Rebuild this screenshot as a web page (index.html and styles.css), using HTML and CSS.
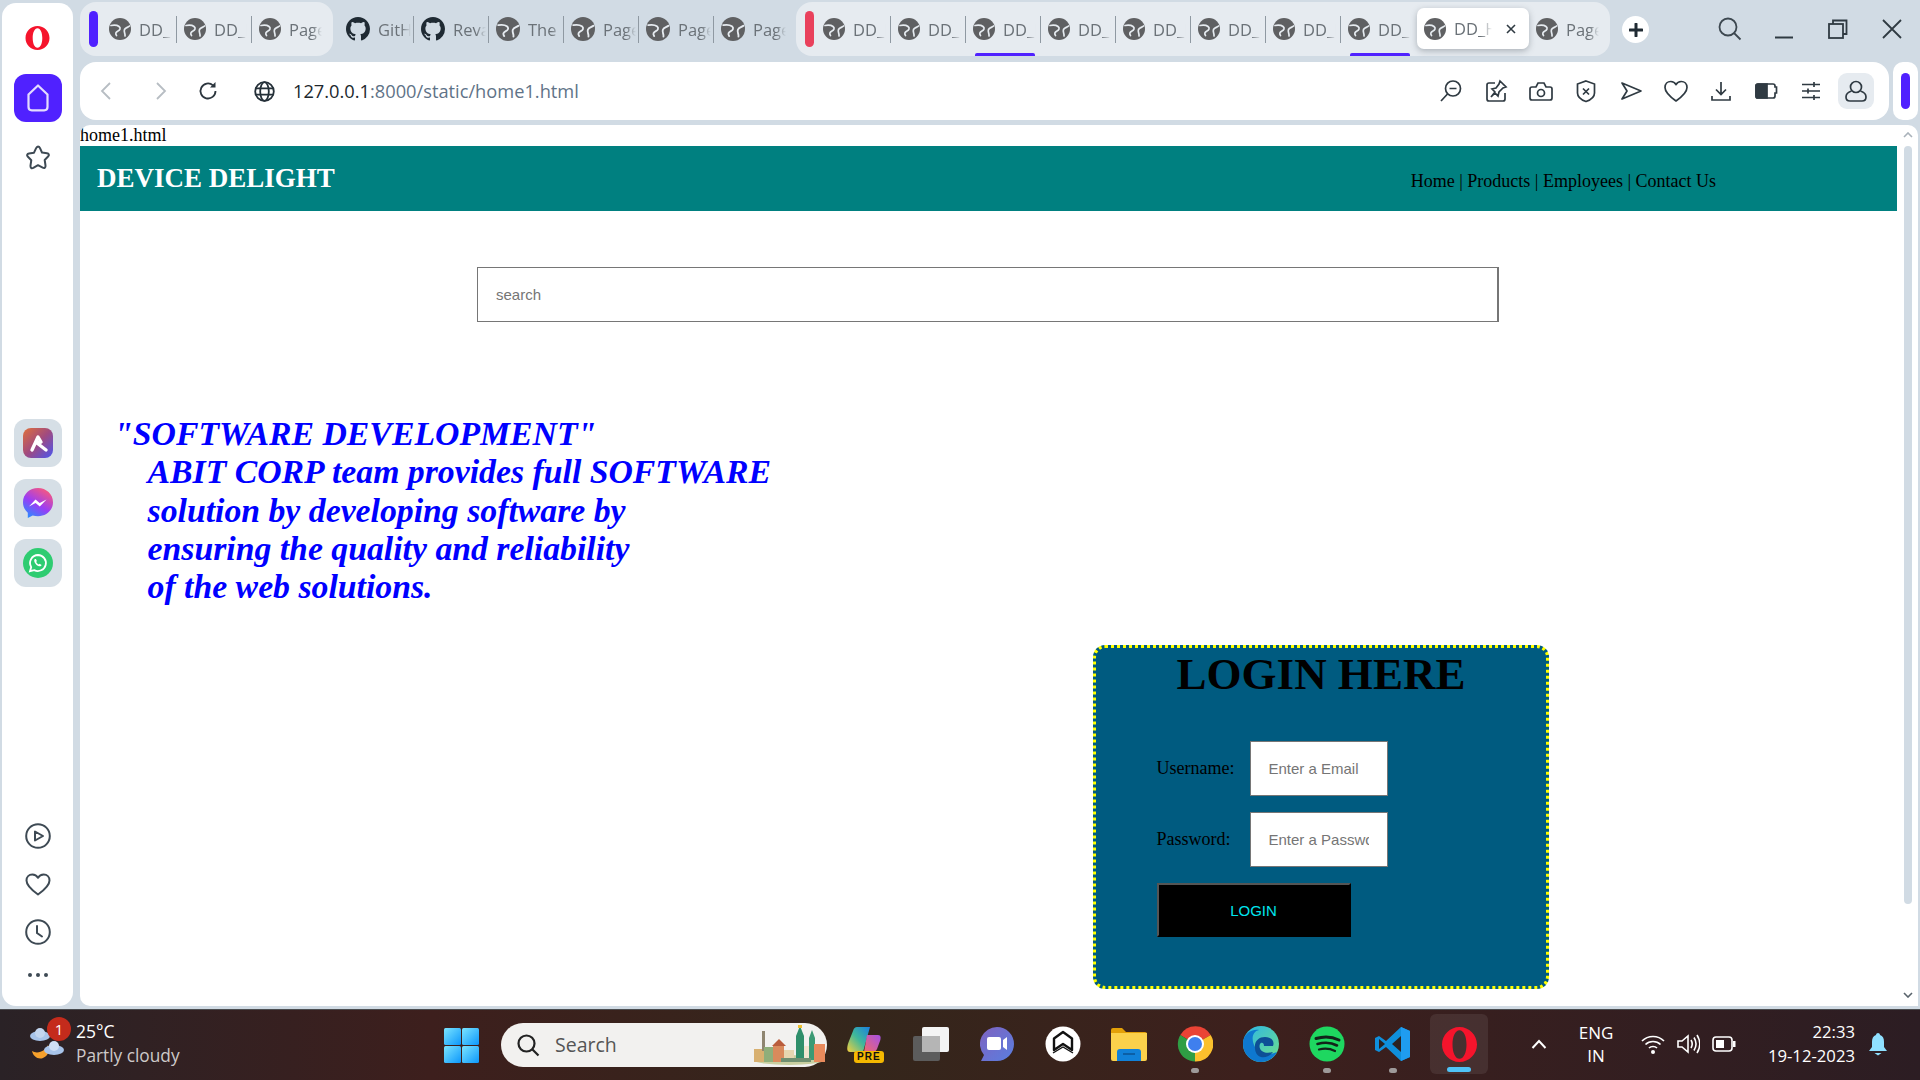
FILE: index.html
```html
<!DOCTYPE html>
<html lang="en">
<head>
<meta charset="utf-8">
<title>DD_Home</title>
<link rel="stylesheet" href="styles.css">
</head>
<body>
<svg class="defs" width="0" height="0" aria-hidden="true">
  <symbol id="globe" viewBox="0 0 22 22">
    <circle cx="11" cy="11" r="11" fill="#5f6062"/>
    <path d="M2 7.500c3-.5 6-.5 8 1 2 1.500 1 3.500-1 4.500-2 1-3 2.500-1.500 4.500M20.500 8c-1.500 1.500-4 1.500-5 3.500-1 2.500 1 4 .5 6.500" fill="none" stroke="#e6ebf0" stroke-width="1.700" stroke-linecap="round"/>
  </symbol>
  <symbol id="github" viewBox="0 0 16 16">
    <path fill="#1f2a33" d="M8 0C3.58 0 0 3.58 0 8c0 3.54 2.29 6.53 5.47 7.59.4.07.55-.17.55-.38 0-.19-.01-.82-.01-1.490-2.010.37-2.530-.49-2.690-.94-.09-.23-.48-.94-.82-1.130-.28-.15-.68-.52-.01-.53.63-.01 1.080.58 1.230.82.72 1.210 1.870.87 2.330.66.07-.52.28-.87.51-1.070-1.780-.2-3.640-.89-3.640-3.950 0-.87.31-1.590.82-2.150-.08-.2-.36-1.020.08-2.120 0 0 .67-.21 2.200.82.64-.18 1.320-.27 2-.27.68 0 1.360.09 2 .27 1.530-1.040 2.200-.82 2.200-.82.44 1.100.16 1.920.08 2.120.51.56.82 1.270.82 2.150 0 3.070-1.870 3.750-3.650 3.950.29.25.54.73.54 1.480 0 1.070-.01 1.930-.01 2.200 0 .21.15.46.55.38A8.013 8.013 0 0 0 16 8c0-4.420-3.580-8-8-8z"/>
  </symbol>
</svg>

<div class="screen">
  <div class="browser">
    <aside class="sidebar">
      <svg class="side-logo" viewBox="0 0 24 24"><path fill="#f5142c" fill-rule="evenodd" d="M12 0c6.600 0 12 5.400 12 12s-5.400 12-12 12S0 18.600 0 12 5.400 0 12 0zm0 2.200c-3 0-4.800 4.500-4.800 9.800s1.800 9.800 4.800 9.800 4.800-4.500 4.800-9.800S15 2.200 12 2.200z"/></svg>
      <div class="side-home">
        <svg width="26" height="30" viewBox="0 0 26 30"><path d="M13 2.500 3.500 11.500v12.500c0 2 1.300 3.300 3.300 3.300h12.400c2 0 3.300-1.300 3.300-3.300V11.500z" fill="none" stroke="#e4dcff" stroke-width="2.200" stroke-linejoin="round"/></svg>
      </div>
      <svg class="side-star" viewBox="0 0 28 28"><path d="M14 2.500c1 0 1.600.8 2 1.700l2 4.300 5 .8c1.800.3 2.500 1.800 1.300 3l-3.600 3.700.8 5.500c.3 2-1 3-2.800 2.100L14 21.200l-4.700 2.600c-1.800.9-3.100-.1-2.800-2.100l.8-5.500-3.600-3.700c-1.200-1.200-.5-2.700 1.300-3l5-.8 2-4.300c.4-.9 1-1.700 2-1.700z" fill="none" stroke="#3e4a54" stroke-width="2" stroke-linejoin="round"/></svg>

      <div class="side-apps">
        <div class="side-tile">
          <svg width="30" height="30" viewBox="0 0 30 30"><defs><linearGradient id="aria" x1="0" y1="0" x2="1" y2="1"><stop offset="0" stop-color="#e0703a"/><stop offset=".5" stop-color="#a04a80"/><stop offset="1" stop-color="#4a55f0"/></linearGradient></defs><rect width="30" height="30" rx="8" fill="url(#aria)"/><path d="M9 22 15 9l3 5-4 1 9 7" fill="none" stroke="#fff" stroke-width="3.400" stroke-linejoin="round" stroke-linecap="round"/></svg>
        </div>
        <div class="side-tile">
          <svg width="30" height="30" viewBox="0 0 30 30"><defs><linearGradient id="msg" x1=".2" y1="1" x2=".8" y2="0"><stop offset="0" stop-color="#2a8cff"/><stop offset=".45" stop-color="#9a3df5"/><stop offset="1" stop-color="#ff5a75"/></linearGradient></defs><path d="M15 0C6.700 0 0 6.100 0 14.200c0 4.300 1.800 8 4.800 10.500V30l4.900-2.600c1.700.5 3.400.8 5.300.8 8.300 0 15-6 15-14S23.300 0 15 0z" fill="url(#msg)"/><path d="M6 18.500l6.500-7 4.200 3.600 6.800-3.600-6.700 7-4.200-3.600z" fill="#fff"/></svg>
        </div>
        <div class="side-tile">
          <svg width="30" height="30" viewBox="0 0 30 30"><circle cx="15" cy="15" r="15" fill="#2ecc71"/><path d="M15 7a8 8 0 0 0-6.800 12.100L7 23.200l4.200-1.100A8 8 0 1 0 15 7z" fill="none" stroke="#fff" stroke-width="1.800"/><path d="M12 11c-1 .6-1 2-.3 3.400 1 1.900 2.500 3.200 4.300 3.800 1.200.3 2.300-.3 2.600-1.200l-2-1.200-.9.800c-1-.4-2-1.400-2.500-2.500l.7-1-1-2.200z" fill="#fff"/></svg>
        </div>
      </div>

      <div class="side-tools">
        <svg width="26" height="26" viewBox="0 0 26 26"><circle cx="13" cy="13" r="11.800" fill="none" stroke="#3e4a54" stroke-width="2"/><path d="M10 8.500v9l8-4.500z" fill="none" stroke="#3e4a54" stroke-width="2" stroke-linejoin="round"/></svg>
        <svg width="26" height="26" viewBox="0 0 26 26"><path d="M13 23.500C6 18.500 1.500 14.500 1.500 9.500 1.500 6 4 3.500 7.300 3.500c2.500 0 4.500 1.200 5.700 3.300 1.200-2.100 3.200-3.300 5.700-3.300 3.300 0 5.800 2.500 5.800 6 0 5-4.500 9-11.500 14z" fill="none" stroke="#3e4a54" stroke-width="2" stroke-linejoin="round"/></svg>
        <svg width="26" height="26" viewBox="0 0 26 26"><circle cx="13" cy="13" r="11.800" fill="none" stroke="#3e4a54" stroke-width="2"/><path d="M12 7v7l5 3.500" fill="none" stroke="#3e4a54" stroke-width="2" stroke-linecap="round"/></svg>
        <svg class="side-more" width="22" height="6" viewBox="0 0 22 6"><circle cx="3" cy="3" r="2" fill="#3e4a54"/><circle cx="11" cy="3" r="2" fill="#3e4a54"/><circle cx="19" cy="3" r="2" fill="#3e4a54"/></svg>
      </div>
    </aside>

    <div class="main">
      <div class="tabstrip">
        <div class="tab-group group-a">
          <span class="group-pill pill-violet"></span>
          <div class="tab"><svg class="fav"><use href="#globe"/></svg><span class="tab-title">DD_Home</span></div>
          <div class="tab"><svg class="fav"><use href="#globe"/></svg><span class="tab-title">DD_Home</span></div>
          <div class="tab tab-end"><svg class="fav"><use href="#globe"/></svg><span class="tab-title">Page</span></div>
        </div>
        <div class="tab-free">
          <div class="tab"><svg class="fav"><use href="#github"/></svg><span class="tab-title">GitHub</span></div>
          <div class="tab"><svg class="fav"><use href="#github"/></svg><span class="tab-title">Reva</span></div>
          <div class="tab"><svg class="fav"><use href="#globe"/></svg><span class="tab-title">The</span></div>
          <div class="tab"><svg class="fav"><use href="#globe"/></svg><span class="tab-title">Page</span></div>
          <div class="tab"><svg class="fav"><use href="#globe"/></svg><span class="tab-title">Page</span></div>
          <div class="tab tab-end"><svg class="fav"><use href="#globe"/></svg><span class="tab-title">Page</span></div>
        </div>
        <div class="tab-group group-b">
          <span class="group-pill pill-red"></span>
          <div class="tab"><svg class="fav"><use href="#globe"/></svg><span class="tab-title">DD_Home</span></div>
          <div class="tab"><svg class="fav"><use href="#globe"/></svg><span class="tab-title">DD_Home</span></div>
          <div class="tab tab-mark"><svg class="fav"><use href="#globe"/></svg><span class="tab-title">DD_Home</span></div>
          <div class="tab"><svg class="fav"><use href="#globe"/></svg><span class="tab-title">DD_Home</span></div>
          <div class="tab"><svg class="fav"><use href="#globe"/></svg><span class="tab-title">DD_Home</span></div>
          <div class="tab"><svg class="fav"><use href="#globe"/></svg><span class="tab-title">DD_Home</span></div>
          <div class="tab"><svg class="fav"><use href="#globe"/></svg><span class="tab-title">DD_Home</span></div>
          <div class="tab tab-mark tab-end"><svg class="fav"><use href="#globe"/></svg><span class="tab-title">DD_Home</span></div>
          <div class="tab tab-active">
            <svg class="fav"><use href="#globe"/></svg><span class="tab-title">DD_Home</span>
            <svg class="tab-close" width="12" height="12" viewBox="0 0 12 12"><path d="M2 2l8 8M10 2l-8 8" stroke="#2f3a42" stroke-width="1.600"/></svg>
          </div>
          <div class="tab tab-end tab-last"><svg class="fav"><use href="#globe"/></svg><span class="tab-title">Page</span></div>
        </div>
        <div class="new-tab"><svg width="14" height="14" viewBox="0 0 14 14"><path d="M7 1v12M1 7h12" stroke="#1f2a33" stroke-width="3" stroke-linecap="round"/></svg></div>
        <div class="win-controls">
          <svg width="24" height="24" viewBox="0 0 24 24"><circle cx="10" cy="10" r="8.500" fill="none" stroke="#3d4850" stroke-width="1.800"/><path d="M16 16l6.500 6.500" stroke="#3d4850" stroke-width="1.800"/></svg>
          <svg width="24" height="24" viewBox="0 0 24 24"><path d="M3 20.500h18" stroke="#2f3a42" stroke-width="2"/></svg>
          <svg width="24" height="24" viewBox="0 0 24 24"><path d="M7 7V3.500h13.500V17H17" fill="none" stroke="#2f3a42" stroke-width="1.800"/><rect x="3" y="7" width="14" height="14" fill="none" stroke="#2f3a42" stroke-width="1.800"/></svg>
          <svg width="24" height="24" viewBox="0 0 24 24"><path d="M3 3l18 18M21 3L3 21" stroke="#2f3a42" stroke-width="1.800"/></svg>
        </div>
      </div>

      <div class="toolrow">
        <div class="addressbar">
          <svg class="nav-btn" width="14" height="20" viewBox="0 0 14 20"><path d="M11 2 3 10l8 8" fill="none" stroke="#b7bdc3" stroke-width="1.800"/></svg>
          <svg class="nav-btn nav-forward" width="14" height="20" viewBox="0 0 14 20"><path d="M3 2l8 8-8 8" fill="none" stroke="#b7bdc3" stroke-width="1.800"/></svg>
          <svg class="nav-reload" width="20" height="20" viewBox="0 0 20 20"><path d="M17.500 10A7.500 7.500 0 1 1 15 4.400" fill="none" stroke="#2c363e" stroke-width="1.800"/><path d="M17.500 1v5.500H12z" fill="#2c363e"/></svg>
          <svg class="site-icon" width="21" height="21" viewBox="0 0 21 21"><g fill="none" stroke="#253039" stroke-width="1.800"><circle cx="10.500" cy="10.500" r="9.300"/><ellipse cx="10.500" cy="10.500" rx="4.300" ry="9.300"/><path d="M1.500 7.300h18M1.500 13.700h18"/></g></svg>
          <div class="url"><span class="url-host">127.0.0.1</span>:8000/static/home1.html</div>
          <div class="tool-icons">
            <svg class="tool" viewBox="0 0 24 24"><circle cx="14" cy="9.500" r="7.500"/><path d="M10.500 9.500h7M8.500 15 2 22"/></svg>
            <svg class="tool" viewBox="0 0 24 24"><path d="M11 4H5a2 2 0 0 0-2 2v14a2 2 0 0 0 2 2h14a2 2 0 0 0 2-2v-6"/><path d="M16 2l6 6-3 1-4 4-1 4-3-3-4 4 4-5-3-3 4-1 3-4z"/></svg>
            <svg class="tool" viewBox="0 0 24 24"><path d="M3 8h4l2-4h6l2 4h4a2 2 0 0 1 2 2v9a2 2 0 0 1-2 2H3a2 2 0 0 1-2-2v-9a2 2 0 0 1 2-2z"/><circle cx="12" cy="14" r="3.500"/></svg>
            <svg class="tool" viewBox="0 0 24 24"><path d="M12 2l8.500 3v9c0 4-4 7-8.500 8.500C7.500 21 3.500 18 3.500 14V5z"/><path d="M9 9.500l6 6M15 9.500l-6 6"/></svg>
            <svg class="tool" viewBox="0 0 24 24"><path d="M3 4l19 8-19 8 5-8z" stroke-linejoin="round"/></svg>
            <svg class="tool" viewBox="0 0 24 24"><path d="M12 22C5 17 1 13 1 8.500 1 5 3.500 2.500 6.800 2.500c2.300 0 4.200 1.200 5.200 3.200 1-2 2.900-3.200 5.200-3.200C20.500 2.500 23 5 23 8.500 23 13 19 17 12 22z" stroke-linejoin="round"/></svg>
            <svg class="tool" viewBox="0 0 24 24"><path d="M12 3v12M7 10.500l5 5 5-5M3 17v4h18v-4"/></svg>
            <svg class="tool" viewBox="0 0 24 24"><path d="M4 5h15a2 2 0 0 1 2 2v1h1.500v6H21v3a2 2 0 0 1-2 2H4a2 2 0 0 1-2-2V7a2 2 0 0 1 2-2z"/><path class="tool-fill" d="M4 5h9v14H4a2 2 0 0 1-2-2V7a2 2 0 0 1 2-2z"/></svg>
            <svg class="tool" viewBox="0 0 24 24"><path d="M3 5.500h18M3 12h18M3 18.500h18M15 3v5M9 9.500v5M15 16v5"/></svg>
            <div class="tool-profile"><svg class="tool" viewBox="0 0 24 24"><circle cx="12" cy="8" r="5.500"/><path d="M7.500 12c-3 1-5.500 3-5.500 6 0 2.500 1.500 4 4 4h12c2.500 0 4-1.500 4-4 0-3-2.500-5-5.500-6"/></svg></div>
          </div>
        </div>
        <div class="side-panel"><span class="panel-pill"></span></div>
      </div>

      <div class="viewport">
        <main class="page">
          <div class="file-label">home1.html</div>
          <header class="site-header">
            <div class="site-title">DEVICE DELIGHT</div>
            <nav class="site-nav">Home | Products | Employees | Contact Us</nav>
          </header>
          <input class="search-input" type="text" placeholder="search">
          <div class="intro">
            <div class="intro-head">"SOFTWARE DEVELOPMENT"</div>
            <div class="intro-line">ABIT CORP team provides full SOFTWARE</div>
            <div class="intro-line">solution by developing software by</div>
            <div class="intro-line">ensuring the quality and reliability</div>
            <div class="intro-line">of the web solutions.</div>
          </div>
          <form class="login-card">
            <h1 class="login-title">LOGIN HERE</h1>
            <div class="login-row"><label class="login-label">Username:</label><input class="login-input" type="text" placeholder="Enter a Email"></div>
            <div class="login-row"><label class="login-label">Password:</label><input class="login-input" type="text" placeholder="Enter a Password"></div>
            <button class="login-btn" type="button">LOGIN</button>
          </form>
        </main>
        <div class="scrollbar">
          <svg width="10" height="6" viewBox="0 0 10 6"><path d="M1 5l4-4 4 4" fill="none" stroke="#a9b2ba" stroke-width="1.600"/></svg>
          <span class="scroll-thumb"></span>
          <svg width="10" height="6" viewBox="0 0 10 6"><path d="M1 1l4 4 4-4" fill="none" stroke="#59636c" stroke-width="1.600"/></svg>
        </div>
      </div>
    </div>
  </div>

  <footer class="taskbar">
    <div class="weather">
      <div class="weather-icon">
        <svg width="38" height="38" viewBox="0 0 38 38"><path d="M3 25c3 2 8 2 12-1 2-1.500 3-3 4-5 2 6 0 11-5 13-5 2-10-2-11-7z" fill="#f5a02c"/><ellipse cx="11" cy="10" rx="10" ry="5" fill="#a8c4ea"/><circle cx="11" cy="7" r="5" fill="#c3d6f0"/><ellipse cx="25" cy="24" rx="10" ry="5" fill="#a8c4ea"/><circle cx="25" cy="20" r="5" fill="#cfdff4"/></svg>
        <span class="weather-badge">1</span>
      </div>
      <div class="weather-text">
        <div class="weather-temp">25°C</div>
        <div class="weather-desc">Partly cloudy</div>
      </div>
    </div>
    <svg class="start" width="35" height="35" viewBox="0 0 35 35"><defs><linearGradient id="win" x1="0" y1="0" x2="1" y2="1"><stop offset="0" stop-color="#7be5ff"/><stop offset="1" stop-color="#0c97fb"/></linearGradient></defs><g fill="url(#win)"><rect width="17" height="17" rx="1.500"/><rect x="18" width="17" height="17" rx="1.500"/><rect y="18" width="17" height="17" rx="1.500"/><rect x="18" y="18" width="17" height="17" rx="1.500"/></g></svg>
    <div class="taskbar-search">
      <svg width="24" height="24" viewBox="0 0 24 24"><circle cx="10.500" cy="10.500" r="8" fill="none" stroke="#222" stroke-width="2.200"/><path d="M16.500 16.500l6 6" stroke="#222" stroke-width="2.200"/></svg>
      <span class="taskbar-search-text">Search</span>
      <svg class="search-art" width="76" height="42" viewBox="0 0 76 42"><ellipse cx="38" cy="36" rx="35" ry="5" fill="#c9cfa0"/><rect x="3" y="25" width="10" height="13" fill="#d8b070"/><rect x="11" y="7" width="3" height="20" fill="#8f8570"/><rect x="13" y="23" width="9" height="15" fill="#8fae7a"/><rect x="22" y="21" width="11" height="17" fill="#d98a5c"/><path d="M21 22l7-7 7 7z" fill="#b95c3c"/><rect x="33" y="26" width="10" height="12" fill="#e6d6b0"/><path d="M45 12l4-10 4 10v24h-8z" fill="#2f8f6b"/><rect x="53" y="22" width="6" height="16" fill="#f0e5cf"/><path d="M58 14l3-8 3 8v22h-6z" fill="#3c9a74"/><rect x="63" y="20" width="11" height="18" fill="#e88a5c"/><path d="M47 1h4v3h-4z" fill="#f0c030"/><path d="M30 34h30v4H30z" fill="#6f8f70"/></svg>
    </div>
    <div class="task-apps">
      <div class="task-app">
        <svg width="36" height="36" viewBox="0 0 36 36"><defs><linearGradient id="cop1" x1="0" y1="1" x2="1" y2="0"><stop offset="0" stop-color="#f7cf3b"/><stop offset=".5" stop-color="#3fb89a"/><stop offset="1" stop-color="#1a7fe0"/></linearGradient><linearGradient id="cop2" x1="0" y1="1" x2="1" y2="0"><stop offset="0" stop-color="#f06a6a"/><stop offset="1" stop-color="#a650e6"/></linearGradient></defs><path d="M10 1h13l-7 25H3C-1 26 0 20 2 15l4-10c1-3 2-4 4-4z" fill="url(#cop1)"/><path d="M20 9h11c3 0 3 3 2 6l-3 8c-1 2-2 3-4 3H17z" fill="url(#cop2)"/></svg>
        <span class="pre-badge">PRE</span>
      </div>
      <div class="task-app">
        <svg width="36" height="34" viewBox="0 0 36 34"><rect y="9" width="27" height="25" rx="2" fill="#5c5c5c"/><rect x="9" width="27" height="25" rx="2" fill="#f4f4f4"/><rect x="9" y="9" width="18" height="16" fill="#b5b5b5"/></svg>
      </div>
      <div class="task-app">
        <svg width="34" height="36" viewBox="0 0 34 36"><defs><linearGradient id="meet" x1="0" y1="0" x2="1" y2="1"><stop offset="0" stop-color="#7e62c0"/><stop offset="1" stop-color="#5a7fe0"/></linearGradient></defs><path d="M17 1a17 17 0 0 1 0 34H1l3-6A17 17 0 0 1 17 1z" fill="url(#meet)"/><rect x="7" y="11" width="14" height="13" rx="2" fill="#fff"/><path d="M23 14l4-3v13l-4-3z" fill="#fff"/></svg>
      </div>
      <div class="task-app">
        <svg width="36" height="36" viewBox="0 0 36 36"><circle cx="18" cy="18" r="17.500" fill="#fff"/><path d="M18 6l9 6.500V24l-9-6-9 6V12.500z" fill="none" stroke="#111" stroke-width="2.400" stroke-linejoin="round"/><path d="M8 27l10-6 10 6" fill="none" stroke="#111" stroke-width="1.400"/></svg>
      </div>
      <div class="task-app">
        <svg width="36" height="33" viewBox="0 0 36 33"><path d="M0 2a2 2 0 0 1 2-2h9l4 4h19a2 2 0 0 1 2 2v5H0z" fill="#e3a008"/><path d="M0 5h36v26a2 2 0 0 1-2 2H2a2 2 0 0 1-2-2z" fill="#fbd14b"/><path d="M6 33v-9a3 3 0 0 1 3-3h18a3 3 0 0 1 3 3v9z" fill="#1181d8"/><path d="M12 26h12" stroke="#0c5fa5" stroke-width="2"/></svg>
      </div>
      <div class="task-app">
        <svg width="36" height="36" viewBox="0 0 36 36"><path d="M18 18 3.300 9A17.500 17.500 0 0 1 33.700 9z" fill="#ea4335"/><path d="M18 18 33.700 9A17.500 17.500 0 0 1 18 35.500z" fill="#fbc02d"/><path d="M18 18V35.500A17.500 17.500 0 0 1 3.300 9z" fill="#2f9e44"/><circle cx="18" cy="18" r="9" fill="#fff"/><circle cx="18" cy="18" r="7" fill="#3f7fee"/></svg>
        <span class="task-dot"></span>
      </div>
      <div class="task-app">
        <svg width="36" height="36" viewBox="0 0 36 36"><defs><linearGradient id="edge1" x1="0" y1="0" x2="1" y2="1"><stop offset="0" stop-color="#2bb5e8"/><stop offset="1" stop-color="#6ee08a"/></linearGradient></defs><circle cx="18" cy="18" r="18" fill="url(#edge1)"/><path d="M0 18C0 8 8 3 16 4c-6 1-8 8-5 15 3 8 12 12 23 7-3 6-9 10-16 10C8 36 0 28 0 18z" fill="#0e78cf"/><path d="M12 22c-1-7 4-11 10-11 6 0 10 4 8 9h-9c0-4-3-4-4-2-2 4 2 11 13 8-3 4-8 6-12 5-4-1-6-5-6-9z" fill="#0d4f96"/></svg>
      </div>
      <div class="task-app">
        <svg width="36" height="36" viewBox="0 0 36 36"><circle cx="18" cy="18" r="17.500" fill="#1ed760"/><g fill="none" stroke="#12231a" stroke-linecap="round"><path d="M7 12.500c8-2.500 16-2 23 1.500" stroke-width="3"/><path d="M8.500 18c7-2 14-1.500 19.500 1.500" stroke-width="2.600"/><path d="M10 23.500c6-1.500 11-1 16 1.500" stroke-width="2.200"/></g></svg>
        <span class="task-dot"></span>
      </div>
      <div class="task-app">
        <svg width="36" height="36" viewBox="0 0 36 36"><path d="M26 1l9 4v26l-9 4-15-14-7 5-4-2v-12l4-2 7 5z" fill="#0f8fdc"/><path d="M26 10l-9 8 9 8z" fill="#2b2222"/><path d="M4 13l6 5-6 5z" fill="#2b2222"/><path d="M26 1l9 4v26l-9 4z" fill="#1f9cf0"/></svg>
        <span class="task-dot"></span>
      </div>
      <div class="task-app task-app-active">
        <svg width="35" height="35" viewBox="0 0 24 24"><path fill="#f5142c" fill-rule="evenodd" d="M12 0c6.600 0 12 5.400 12 12s-5.400 12-12 12S0 18.600 0 12 5.400 0 12 0zm0 2.200c-3 0-4.800 4.500-4.800 9.800s1.800 9.800 4.800 9.800 4.800-4.500 4.800-9.800S15 2.200 12 2.200z"/></svg>
        <span class="task-active-bar"></span>
      </div>
    </div>
    <div class="tray">
      <svg class="tray-caret" width="16" height="10" viewBox="0 0 16 10"><path d="M1.500 9 8 2l6.500 7" fill="none" stroke="#fff" stroke-width="2"/></svg>
      <div class="tray-lang"><div>ENG</div><div>IN</div></div>
      <svg class="tray-wifi" width="24" height="24" viewBox="0 0 24 24"><g fill="none" stroke="#fff" stroke-width="1.700"><path d="M1 9c6-6 16-6 22 0M4.500 12.500c4-4 11-4 15 0M8 16c2-2 6-2 8 0"/></g><circle cx="12" cy="20" r="2" fill="#fff"/></svg>
      <svg class="tray-vol" width="24" height="24" viewBox="0 0 24 24"><g fill="none" stroke="#fff" stroke-width="1.600"><path d="M2 9h4l6-5v16l-6-5H2z"/><path d="M15 8c1.500 2.500 1.500 5.500 0 8M18 5.500c2.500 4 2.500 9 0 13M21 3c3.500 5.500 3.500 12.500 0 18"/></g></svg>
      <svg class="tray-batt" width="24" height="16" viewBox="0 0 24 16"><rect x="1" y="1" width="19" height="14" rx="3" fill="none" stroke="#fff" stroke-width="1.600"/><rect x="4" y="4" width="8" height="8" fill="#fff"/><rect x="21" y="5" width="2.500" height="6" fill="#fff"/></svg>
      <div class="tray-clock"><div>22:33</div><div>19-12-2023</div></div>
      <svg class="tray-bell" width="20" height="24" viewBox="0 0 20 24"><path d="M10 1c-1 0-2 .8-2 2-3 1-4 3.500-4 7v5l-3 4h18l-3-4v-5c0-3.500-1-6-4-7 0-1.200-1-2-2-2z" fill="#8fe0ff"/><path d="M6.500 21h7l-3.500 2.500z" fill="#8fe0ff"/></svg>
    </div>
  </footer>
</div>
</body>
</html>
```

FILE: styles.css
```css
* { box-sizing: border-box; }
html, body { margin: 0; padding: 0; width: 1920px; height: 1080px; overflow: hidden; }
body { background: #d1dbe4; font-family: "Liberation Serif", serif; }
.defs { position: absolute; }
.screen { display: flex; flex-direction: column; width: 1920px; height: 1080px; }

/* browser frame */
.browser { display: flex; height: 1009px; background: #d1dbe4; }
.sidebar {
  width: 71px; margin: 3px 0 3px 2px; background: #fff; border-radius: 14px;
  display: flex; flex-direction: column; align-items: center; flex: none;
}
.side-logo { width: 25px; height: 24px; margin-top: 23px; }
.side-home {
  width: 48px; height: 48px; margin-top: 24px; background: #5021ff; border-radius: 12px;
  display: flex; align-items: center; justify-content: center;
}
.side-star { width: 28px; height: 28px; margin-top: 22px; }
.side-apps { display: flex; flex-direction: column; gap: 12px; margin-top: 247px; }
.side-tile {
  width: 48px; height: 48px; background: #d6dfe6; border-radius: 12px;
  display: flex; align-items: center; justify-content: center;
}
.side-tools { display: flex; flex-direction: column; align-items: center; gap: 22px; margin-top: 236px; }
.side-more { margin-top: 5px; }

.main { display: flex; flex-direction: column; width: 1838px; margin-left: 7px; padding-top: 2px; flex: none; }

/* tabs */
.tabstrip { display: flex; height: 54px; flex: none; }
.tab-group { display: flex; align-items: center; background: #e6ebf0; border-radius: 16px; height: 54px; padding-left: 9px; }
.group-a { width: 253px; }
.group-b { width: 814px; margin-left: 7px; }
.tab-free { display: flex; align-items: center; width: 456px; padding-left: 6px; }
.group-pill { width: 9px; height: 36px; border-radius: 5px; margin-right: 3px; flex: none; }
.pill-violet { background: #5021ff; margin-right: 4px; }
.pill-red { background: #e9415c; margin-right: 2px; }
.tab {
  position: relative; display: flex; align-items: center; width: 75px; height: 27px; flex: none;
  padding-left: 7px; border-right: 1px solid #8f99a2;
}
.tab-end { border-right: none; }
.fav { width: 22px; height: 22px; flex: none; }
.tab-free .fav { width: 24px; height: 24px; }
.tab-title {
  margin-left: 8px; width: 33px; overflow: hidden; white-space: nowrap; flex: none;
  font: 16.500px "Open Sans", sans-serif; color: #6b7278;
  -webkit-mask-image: linear-gradient(to right, #000 70%, transparent 100%);
  mask-image: linear-gradient(to right, #000 70%, transparent 100%);
}
.tab-mark::after {
  content: ""; position: absolute; left: 9px; bottom: -13.500px; width: 60px; height: 3px;
  background: #5021ff; border-radius: 2px 2px 0 0;
}
.tab-active {
  width: 112px; height: 41px; margin-left: 1px; background: #fff; border: none; border-radius: 7px;
  box-shadow: 0 2px 6px rgba(60, 70, 80, .35); margin-top: -1px;
}
.tab-active .tab-title { width: 38px; }
.tab-close { margin-left: 13px; }
.tab-last { width: 80px; padding-left: 7px; }
.new-tab {
  width: 27px; height: 27px; margin: 14px 0 0 12px; background: #fff; border-radius: 50%;
  display: flex; align-items: center; justify-content: center; flex: none;
}
.win-controls { display: flex; align-items: center; gap: 30px; margin-left: 69px; }

/* address row */
.toolrow { display: flex; gap: 4px; height: 58px; margin-top: 6px; flex: none; }
.addressbar { display: flex; align-items: center; width: 1809px; background: #fff; border-radius: 16px; padding-left: 19px; }
.nav-forward { margin-left: 41px; }
.nav-reload { margin-left: 30px; }
.site-icon { margin-left: 36px; }
.url { margin: -2px 0 0 18px; font: 18.250px "Open Sans", sans-serif; color: #5f7388; white-space: nowrap; }
.url-host { color: #20272d; }
.tool-icons { display: flex; align-items: center; gap: 21px; margin-left: auto; padding-right: 15px; }
.tool { width: 24px; height: 24px; fill: none; stroke: #2f3a42; stroke-width: 1.700; flex: none; }
.tool-fill { fill: #2f3a42; }
.tool-profile {
  width: 36px; height: 36px; margin-left: -6px; background: #e6ebf0; border-radius: 9px;
  display: flex; align-items: center; justify-content: center;
}
.side-panel { width: 25px; background: #fff; border-radius: 10px; display: flex; align-items: center; justify-content: center; }
.panel-pill { width: 9px; height: 36px; background: #5021ff; border-radius: 5px; }

/* viewport */
.viewport { display: flex; height: 881px; margin-top: 5px; background: #fff; border-radius: 10px 10px 0 10px; overflow: hidden; flex: none; }
.page { width: 1817px; flex: none; font-size: 18px; color: #000; }
.file-label { height: 21px; line-height: 21px; }
.site-header {
  display: flex; justify-content: space-between; align-items: center; height: 65px;
  padding: 0 181px 0 17px; background: #008080;
}
.site-title { font-size: 27px; font-weight: bold; color: #fff; margin-top: -1px; }
.site-nav { margin-top: 6px; }
.search-input {
  display: block; width: 1022px; height: 55px; margin: 56px 0 0 397px; padding: 0 18px;
  font: 15px "Liberation Sans", sans-serif; background: #fff;
  border: 1px solid #767676; border-right-width: 2px; outline: none; border-radius: 0;
}
.search-input::placeholder, .login-input::placeholder { color: #757575; opacity: 1; }
.intro { margin: 93px 0 0 34px; font-size: 33.750px; line-height: 38.300px; font-weight: bold; font-style: italic; color: #0000ff; white-space: nowrap; }
.intro-line { margin-left: 33.500px; }
.login-card {
  width: 456px; height: 344px; margin: 39px 0 0 1013px; padding: 0 0 0 60.500px;
  background: #005b80; border: 3px dotted #ffff00; border-radius: 12px;
}
.login-title { margin: 0 0 0 -60.500px; font-size: 45px; line-height: 52px; font-weight: bold; text-align: center; }
.login-row { display: flex; align-items: center; height: 55px; margin-top: 16px; }
.login-title + .login-row { margin-top: 41px; }
.login-label { width: 93px; font-size: 18px; flex: none; }
.login-input {
  width: 138px; height: 55px; padding: 0 18px; background: #fff; flex: none;
  font: 15px "Liberation Sans", sans-serif; border: 1px solid #767676; border-radius: 0; outline: none;
}
.login-btn {
  display: block; width: 194px; height: 54px; margin-top: 16px; padding: 0; background: #000; color: #00e5ee;
  font: 15px "Liberation Sans", sans-serif; border: 2px outset #555; border-radius: 0;
}
.scrollbar { display: flex; flex-direction: column; align-items: center; width: 21px; padding: 7px 0 8px; flex: none; }
.scroll-thumb { width: 8px; height: 758px; margin-top: 8px; margin-bottom: auto; background: #d1dbe4; border-radius: 4px; }

/* taskbar */
.taskbar {
  display: flex; align-items: center; height: 71px; padding-bottom: 2px; flex: none; color: #fff; font-family: "Open Sans", sans-serif;
  background: linear-gradient(90deg, #2a2226 0, #3d1f1d 430px, #34261b 860px, #3d201d 1250px, #2c1d23 1920px);
  border-top: 1px solid #4b4d50;
}
.weather { display: flex; align-items: center; width: 444px; padding-left: 29px; flex: none; }
.weather-icon { position: relative; width: 38px; height: 38px; margin-top: 2px; }
.weather-badge {
  position: absolute; left: 18px; top: -9px; width: 24px; height: 24px; border-radius: 50%;
  background: #c42b1c; font-size: 15px; line-height: 24px; text-align: center;
}
.weather-text { margin-left: 9px; margin-top: -1px; }
.weather-temp { font-size: 17.500px; line-height: 25px; }
.weather-desc { font-size: 17.300px; line-height: 24px; color: #cdc9c9; }
.start { margin-top: 2px; flex: none; }
.taskbar-search {
  position: relative; display: flex; align-items: center; width: 326px; height: 44px; margin: 1px 0 0 22px; padding-left: 15px;
  background: #f2f1ef; border-radius: 22px; flex: none;
}
.taskbar-search-text { margin-left: 15px; font-size: 19.500px; color: #555; }
.search-art { margin-left: auto; }
.task-apps { display: flex; height: 60px; margin-left: 5px; flex: none; }
.task-app { position: relative; display: flex; align-items: center; justify-content: center; width: 66px; height: 60px; }
.task-app-active { width: 58px; margin-left: 4px; background: rgba(255, 255, 255, .08); border-radius: 6px; }
.pre-badge {
  position: absolute; left: 22px; bottom: 11px; padding: 0 3px; height: 12px; border-radius: 3px;
  background: #f5b800; color: #111; font: bold 10px/12px "Liberation Sans", sans-serif; letter-spacing: 1px;
}
.task-dot { position: absolute; left: 50%; bottom: 1px; width: 8px; height: 5px; margin-left: -4px; border-radius: 3px; background: #9e9a9a; }
.task-active-bar { position: absolute; left: 17px; bottom: 2px; width: 24px; height: 5px; border-radius: 3px; background: #4fc3f7; }
.tray { display: flex; align-items: center; margin-left: 43px; }
.tray-caret { flex: none; }
.tray-lang { width: 50px; margin-left: 24px; text-align: center; font-size: 17px; line-height: 23px; }
.tray-wifi { margin-left: 20px; }
.tray-vol { margin-left: 11px; }
.tray-batt { margin-left: 12px; }
.tray-clock { width: 110px; text-align: right; font-size: 16.700px; line-height: 24px; margin-left: 9px; }
.tray-bell { margin-left: 13px; }
```
